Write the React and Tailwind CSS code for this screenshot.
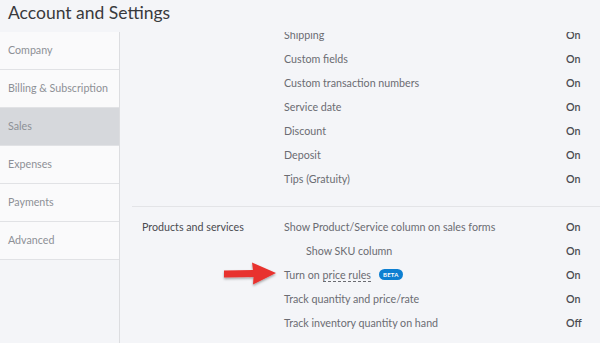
import React from 'react';

const salesRows = [
  { label: 'Shipping', value: 'On' },
  { label: 'Custom fields', value: 'On' },
  { label: 'Custom transaction numbers', value: 'On' },
  { label: 'Service date', value: 'On' },
  { label: 'Discount', value: 'On' },
  { label: 'Deposit', value: 'On' },
  { label: 'Tips (Gratuity)', value: 'On' },
];

const navItems = ['Company', 'Billing & Subscription', 'Sales', 'Expenses', 'Payments', 'Advanced'];

function Row({ children, value, indent }) {
  return (
    <div className="flex h-[24px] items-center">
      <div className={`flex-1 flex items-center ${indent ? 'pl-[22px]' : ''}`}>{children}</div>
      <div className="w-[34px] text-[10.7px] font-semibold text-[#4a4b50]">{value}</div>
    </div>
  );
}

function RedArrow() {
  return (
    <svg width="60" height="28" viewBox="0 0 60 28" className="absolute left-[220px] top-[260px]">
      <defs>
        <filter id="sh" x="-20%" y="-30%" width="140%" height="160%">
          <feDropShadow dx="0" dy="1.5" stdDeviation="1.2" floodColor="#000" floodOpacity="0.35" />
        </filter>
      </defs>
      <path d="M4 10.5 L33 10 L32 2.5 L56 13 L33 24.5 L33.5 17 L4 17.5 Z" fill="#e8332f" filter="url(#sh)" />
    </svg>
  );
}

export default function App() {
  return (
    <div className="relative w-[600px] h-[343px] overflow-hidden bg-[#f4f5f8] font-['Lato',sans-serif]">
      <div className="h-[32px] pl-[8px] pt-[2px] text-[17.5px] leading-[22px] text-[#393a3d]">
        Account and Settings
      </div>
      <div className="flex h-[311px]">
        <div className="w-[120px] shrink-0 border-r border-[#dcdde0]">
          {navItems.map((item) => (
            <div
              key={item}
              className={`h-[38px] flex items-center pl-[8px] text-[10.7px] text-[#8d9096] border-b border-[#e1e2e5] ${
                item === 'Sales' ? 'bg-[#d6d8dc]' : 'bg-[#fafafb]'
              }`}
            >
              {item}
            </div>
          ))}
        </div>
        <div className="flex-1 overflow-hidden pl-[12px]">
          <div className="-mt-[9px]">
            <div className="flex pb-[15px]">
              <div className="w-[152px]" />
              <div className="flex-1">
                {salesRows.map((r) => (
                  <Row key={r.label} value={r.value}>
                    <span className="text-[10.7px] text-[#6b6c72]">{r.label}</span>
                  </Row>
                ))}
              </div>
            </div>
            <div className="border-t border-[#e3e4e7] pt-[8px] flex">
              <div className="w-[152px] pl-[10px] h-[24px] flex items-center text-[10.7px] text-[#4a4b50]">
                Products and services
              </div>
              <div className="flex-1">
                <Row value="On">
                  <span className="text-[10.7px] text-[#6b6c72]">Show Product/Service column on sales forms</span>
                </Row>
                <Row value="On" indent>
                  <span className="text-[10.7px] text-[#6b6c72]">Show SKU column</span>
                </Row>
                <Row value="On">
                  <span className="text-[10.7px] text-[#6b6c72]">
                    Turn on{' '}
                    <span className="border-b border-dashed border-[#6b6c72]">price rules</span>
                  </span>
                  <span className="ml-[8px] h-[11px] px-[4px] rounded-full bg-[#0d7fd1] text-white text-[6px] font-bold leading-[11px] tracking-[0.2px]">
                    BETA
                  </span>
                </Row>
                <Row value="On">
                  <span className="text-[10.7px] text-[#6b6c72]">Track quantity and price/rate</span>
                </Row>
                <Row value="Off">
                  <span className="text-[10.7px] text-[#6b6c72]">Track inventory quantity on hand</span>
                </Row>
              </div>
            </div>
          </div>
        </div>
      </div>
      <RedArrow />
    </div>
  );
}
